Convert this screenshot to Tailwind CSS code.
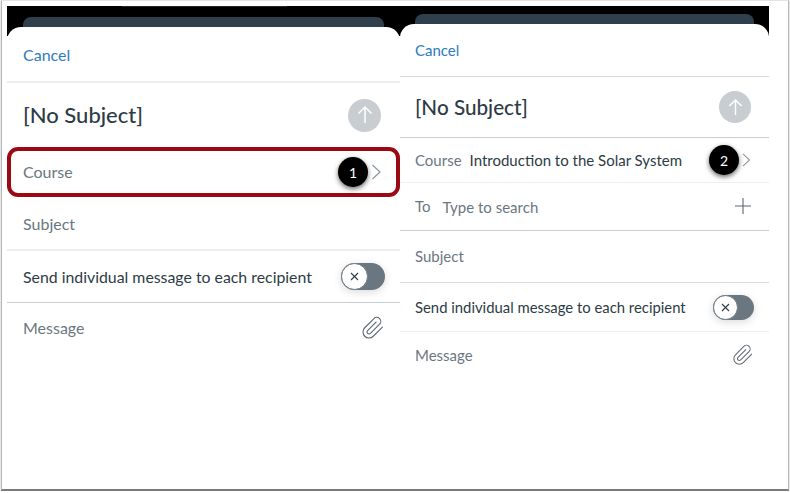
<!DOCTYPE html>
<html>
  <head>
    <title>New Message</title>
    <script src="https://cdn.jsdelivr.net/npm/@tailwindcss/browser@4"></script>
    <meta name="viewport" content="width=device-width">
  </head>

  <body class="bg-white">
    <div class="ml-px w-[788px] h-[491px] bg-white border-x border-x-[#b5b5b5] border-t border-t-[#e4e4e4] border-b-2 border-b-[#7a7a7a] shadow-[0_1px_2px_#bbb] pl-[5px] pt-[5px] flex items-start overflow-hidden font-['Lato','Noto_Sans',sans-serif]">

      <!-- left phone -->
      <section class="w-[393px] shrink-0">
        <div class="h-[30px] bg-black px-4">
          <div class="h-px w-[165px] ml-[99px] bg-[#262626]"></div>
          <div class="mt-[10px] h-[19px] rounded-t-lg bg-[#2f3f4b]"></div>
        </div>
        <div class="relative -mt-[9px] bg-white rounded-t-[14px]">
          <div class="h-[56px] pt-px px-4 flex items-center border-b-2 border-[#eceeef]">
            <span class="text-[16px] text-[#2d7bc0]">Cancel</span>
          </div>
          <div class="h-[64px] pl-4 pr-[19px] flex items-center justify-between">
            <span class="text-[22px] font-medium -mt-px text-[#2d3b45]">[No Subject]</span>
            <span class="w-[33px] h-[33px] rounded-full bg-[#c7cdd1] flex items-center justify-center">
              <svg class="w-5 h-5" viewBox="0 0 20 20" fill="none" stroke="white" stroke-width="1.5"><path d="M10 18V2M3.5 8.5 10 2l6.500 6.500"/></svg>
            </span>
          </div>
          <div class="h-[50px] pl-[12px] pr-[15px] flex items-center border-4 border-[#9b0a12] rounded-[11px]">
            <span class="text-[16px] text-[#6b7780]">Course</span>
            <span class="ml-auto w-[30px] h-[30px] rounded-full bg-black text-white text-[14px] flex items-center justify-center shadow-[0_2px_5px_rgba(0,0,0,0.6)]">1</span>
            <svg class="ml-[3px] w-[10px] h-[18px]" viewBox="0 0 10 18" fill="none" stroke="#8b969e" stroke-width="1.200"><path d="M1.500 2 9 9l-7.500 7"/></svg>
          </div>
          <div class="h-[54px] pt-px px-4 flex items-center border-b-2 border-[#eceeef]">
            <span class="text-[16px] text-[#6b7780]">Subject</span>
          </div>
          <div class="h-[52px] pl-4 pr-[15px] flex items-center justify-between border-b border-[#c7cdd1]">
            <span class="text-[15.850px] text-[#2d3b45]">Send individual message to each recipient</span>
            <span class="w-[44px] h-[27px] rounded-full bg-[#6b7780] flex items-center shadow-[0_2px_8px_rgba(0,0,0,0.15)]">
              <span class="w-[27px] h-[27px] rounded-full bg-white border border-[#6b7780] flex items-center justify-center">
                <svg class="w-[9px] h-[9px]" viewBox="0 0 9 9" fill="none" stroke="#2d3b45" stroke-width="1.100"><path d="m1 1 7 7M8 1 1 8"/></svg>
              </span>
            </span>
          </div>
          <div class="h-[49px] pl-4 pr-[15px] flex items-center justify-between">
            <span class="text-[16px] text-[#6b7780]">Message</span>
            <svg class="w-[24px] h-[24px]" viewBox="0 0 24 24" fill="none" stroke="#5b6770" stroke-width="1.100" stroke-linecap="round"><path d="M21.440 11.050l-9.190 9.190a6 6 0 0 1-8.490-8.490l9.190-9.190a4 4 0 0 1 5.660 5.660l-9.200 9.190a2 2 0 0 1-2.830-2.830l8.490-8.480"/></svg>
          </div>
        </div>
      </section>

      <!-- right phone -->
      <section class="w-[369px] shrink-0">
        <div class="h-[30px] bg-black pl-[15px] pr-[15px] pt-[8px]">
          <div class="h-[22px] rounded-t-lg bg-[#2f3f4b]"></div>
        </div>
        <div class="relative -mt-[12px] bg-white rounded-t-[14px]">
          <div class="h-[53px] px-[15px] flex items-center border-b border-[#d7dadd]">
            <span class="text-[15px] text-[#2d7bc0]">Cancel</span>
          </div>
          <div class="h-[61px] pl-[15px] pr-[18px] flex items-center justify-between border-b border-[#c7cdd1]">
            <span class="text-[20.700px] font-medium mt-px text-[#2d3b45]">[No Subject]</span>
            <span class="w-[32px] h-[32px] rounded-full bg-[#c7cdd1] flex items-center justify-center">
              <svg class="w-[19px] h-[19px]" viewBox="0 0 20 20" fill="none" stroke="white" stroke-width="1.500"><path d="M10 18V2M3.500 8.500 10 2l6.500 6.500"/></svg>
            </span>
          </div>
          <div class="h-[45px] pl-[15px] pr-[18px] flex items-center border-b border-[#eceeef]">
            <span class="text-[15px] text-[#6b7780]">Course</span>
            <span class="ml-[8px] text-[15px] text-[#2d3b45]">Introduction to the Solar System</span>
            <span class="ml-auto w-[30px] h-[30px] rounded-full bg-black text-white text-[14px] flex items-center justify-center shadow-[0_2px_5px_rgba(0,0,0,0.6)]">2</span>
            <svg class="ml-[2px] w-[10px] h-[16px]" viewBox="0 0 10 18" fill="none" stroke="#8b969e" stroke-width="1.200"><path d="M1.500 2 9 9l-7.500 7"/></svg>
          </div>
          <div class="h-[48px] pl-[15px] pr-[18px] flex items-center border-b border-[#c7cdd1]">
            <span class="text-[15px] text-[#6b7780] -mt-px">To</span>
            <span class="ml-[12px] mt-px text-[15px] text-[#6b7780]">Type to search</span>
            <svg class="ml-auto w-[16px] h-[16px] -mt-[2px]" viewBox="0 0 16 16" fill="none" stroke="#5b6770" stroke-width="1.100"><path d="M8 0v16M0 8h16"/></svg>
          </div>
          <div class="h-[52px] px-[15px] flex items-center border-b border-[#d7dadd]">
            <span class="text-[15px] text-[#6b7780]">Subject</span>
          </div>
          <div class="h-[49px] pl-[15px] pr-[15px] flex items-center justify-between border-b border-[#eceeef]">
            <span class="text-[14.850px] text-[#2d3b45]">Send individual message to each recipient</span>
            <span class="w-[41px] h-[25px] rounded-full bg-[#6b7780] flex items-center shadow-[0_2px_8px_rgba(0,0,0,0.15)]">
              <span class="w-[25px] h-[25px] rounded-full bg-white border border-[#6b7780] flex items-center justify-center">
                <svg class="w-[9px] h-[9px]" viewBox="0 0 9 9" fill="none" stroke="#2d3b45" stroke-width="1.100"><path d="m1 1 7 7M8 1 1 8"/></svg>
              </span>
            </span>
          </div>
          <div class="h-[47px] pl-[15px] pr-[15px] flex items-center justify-between">
            <span class="text-[15px] text-[#6b7780]">Message</span>
            <svg class="w-[22px] h-[22px] -mt-[2px]" viewBox="0 0 24 24" fill="none" stroke="#5b6770" stroke-width="1.100" stroke-linecap="round"><path d="M21.440 11.050l-9.190 9.190a6 6 0 0 1-8.490-8.490l9.190-9.190a4 4 0 0 1 5.660 5.660l-9.200 9.190a2 2 0 0 1-2.830-2.830l8.490-8.480"/></svg>
          </div>
        </div>
      </section>
    </div>
  </body>
</html>
